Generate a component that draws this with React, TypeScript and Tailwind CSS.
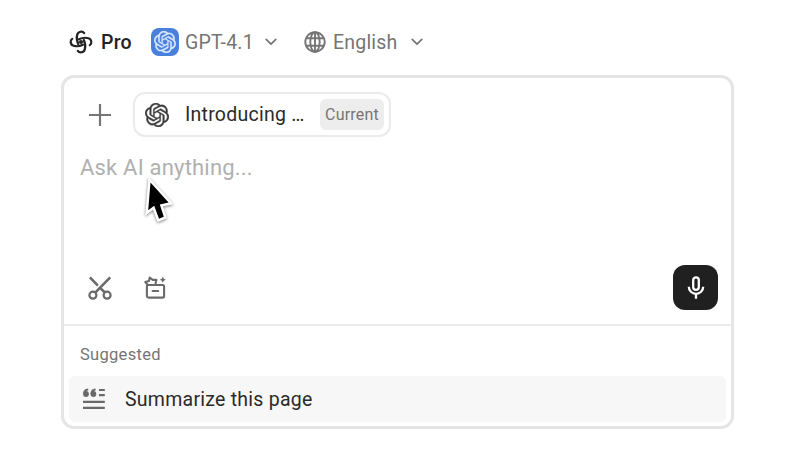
import React from "react";
import { SiOpenai } from "react-icons/si";

function Chevron({ className = "" }: { className?: string }) {
  return (
    <svg className={className} width="12" height="8" viewBox="0 0 12 8" fill="none" stroke="#757575" strokeWidth="1.7" strokeLinecap="round" strokeLinejoin="round">
      <path d="M1.2 1.3 6 6.1l4.8-4.8" />
    </svg>
  );
}

function KnotLogo() {
  const arm = "M15.2 3.2C13.6 .8 9.2 1.2 8.2 4.6C7.4 7.4 7.6 10.6 9.2 14";
  return (
    <svg width="24" height="24" viewBox="0 0 24 24" fill="none" stroke="#222" strokeWidth="2.2" strokeLinecap="round">
      {[0, 90, 180, 270].map((a) => (
        <path key={a} d={arm} transform={`rotate(${a} 12 12)`} />
      ))}
      <circle cx="12" cy="12" r="2.1" fill="#222" stroke="none" />
    </svg>
  );
}

function Globe() {
  return (
    <svg width="22" height="22" viewBox="0 0 22 22" fill="none" stroke="#757575" strokeWidth="1.9">
      <circle cx="11" cy="11" r="9.7" />
      <ellipse cx="11" cy="11" rx="4.7" ry="9.7" />
      <path d="M11 1.3v19.4M2.2 7.3h17.6M2.2 14.7h17.6" />
    </svg>
  );
}

function Scissors() {
  return (
    <svg width="24" height="24" viewBox="0 0 24 24" fill="none" stroke="#6a6a6a" strokeWidth="2.2">
      <path d="M1.9 1.4 9.9 9.6M22.2 1.4 7 16.8M12.6 12.4l4.6 4.4" strokeWidth="2.6" />
      <circle cx="4.9" cy="19.2" r="3.5" />
      <circle cx="19.1" cy="19.2" r="3.5" />
    </svg>
  );
}

function MagicBox() {
  return (
    <svg width="24" height="26" viewBox="0 0 24 26" fill="none" stroke="#6a6a6a" strokeWidth="2.1" strokeLinejoin="round">
      <rect x="3.9" y="10" width="17.2" height="12.6" rx="1.6" />
      <path d="M9.6 16h5.6" strokeLinecap="round" />
      <path d="M4.6 9.8 2.3 7.1l3.8-1.2.6-3.3 3.1 2.3 3.6-.2-1.1 5" />
      <path d="M19.8 1.8l1 2 2 1-2 1-1 2-1-2-2-1 2-1Z" fill="#6a6a6a" stroke="none" />
    </svg>
  );
}

function Mic() {
  return (
    <svg width="18" height="24" viewBox="0 0 18 24" fill="none" stroke="#fff" strokeWidth="2.3">
      <rect x="6.2" y="1.3" width="5.6" height="12.6" rx="2.8" />
      <path d="M1.8 10.8a7.2 7 0 0 0 14.4 0M9 17.8v5" />
    </svg>
  );
}

function SummaryIcon() {
  return (
    <svg width="24" height="22" viewBox="0 0 24 22" fill="none" stroke="#6a6a6a" strokeWidth="2.2">
      <path d="M17 2h5.8M17 7.2h5.8M1 13.9h21.8M1 19.9h21.8" />
      <g fill="#6a6a6a" stroke="none">
        <circle cx="4" cy="6" r="2.9" />
        <circle cx="11.4" cy="6" r="2.9" />
      </g>
      <path d="M2 6C2 3.2 3.4 1.8 6.2 1.5M9.4 6c0-2.8 1.4-4.2 4.2-4.5" strokeWidth="1.8" />
    </svg>
  );
}

function Cursor() {
  const arrow = "M15.5 12.6 13.2 40.2 19.2 35.8 24 48.8 28.8 46.8 24.8 34.4 33.6 32.6Z";
  return (
    <svg className="absolute left-[135px] top-[170px] drop-shadow-[0px_1px_1.5px_rgba(0,0,0,0.5)]" width="48" height="60" viewBox="0 0 48 60">
      <path d={arrow} fill="#fff" stroke="#fff" strokeWidth="5" />
      <path d={arrow} fill="#000" />
    </svg>
  );
}

export default function App() {
  return (
    <div className="relative h-[450px] w-[800px] overflow-hidden bg-white pt-[26px] pl-[61px] font-['Roboto','Liberation_Sans',sans-serif] text-[#757575]">
      <header className="flex h-8 items-center pl-2 text-[19.5px] tracking-[0.2px]">
        <KnotLogo />
        <span className="ml-2 w-[32px] pt-0.5 font-medium text-[#222]">Pro</span>
        <span className="ml-[18px] flex size-7 items-center justify-center rounded-lg bg-[#4980dc] text-[#dceaff]">
          <SiOpenai size={22} stroke="currentColor" strokeWidth={0.3} />
        </span>
        <span className="ml-[6px] w-[68px] pt-0.5 whitespace-nowrap">GPT-4.1</span>
        <Chevron className="ml-3" />
        <span className="ml-[27px]"><Globe /></span>
        <span className="ml-[7px] w-[65px] pt-0.5">English</span>
        <Chevron className="ml-[13px]" />
      </header>
      <main className="mt-[17px] flex h-[354px] w-[673px] flex-col rounded-[13px] border-[3px] border-[#e5e5e5] bg-white">
        <section className="flex h-[246px] flex-col pt-[14px] pr-[13px] pl-4">
          <div className="flex h-[45px] items-center">
            <svg className="ml-2" width="24" height="24" viewBox="0 0 24 24" stroke="#757575" strokeWidth="2.2"><path d="M12 1v22M1 12h22" /></svg>
            <div className="ml-[21px] flex h-[45px] w-[258px] items-center rounded-xl border-2 border-[#ebebeb] pl-[10px] text-[19.5px] text-[#2a2a2a]">
              <SiOpenai size={24} color="#3c3c3c" stroke="currentColor" strokeWidth={0.4} />
              <span className="ml-4 w-[120px] whitespace-nowrap tracking-[0.25px]">Introducing …</span>
              <span className="ml-[15px] flex h-[31px] w-16 items-center justify-center rounded-md bg-[#ededed] text-[16px] tracking-[0.2px] text-[#757575]">Current</span>
            </div>
          </div>
          <p className="mt-[17px] text-[22px] leading-7 tracking-[0.2px] text-[#b0b0b0]">Ask AI anything...</p>
          <div className="mt-auto mb-[14px] flex h-[45px] items-center">
            <span className="ml-2"><Scissors /></span>
            <span className="ml-[31px]"><MagicBox /></span>
            <button className="ml-auto flex size-[45px] items-center justify-center rounded-xl bg-[#202020]"><Mic /></button>
          </div>
        </section>
        <section className="flex-1 border-t-2 border-[#ececec] px-[5px] pt-[17px]">
          <h2 className="pl-[11px] text-[16.5px] leading-6 tracking-[0.3px]">Suggested</h2>
          <div className="mt-[9px] flex h-[46px] items-center rounded-md bg-[#f7f7f7] pl-[13px] text-[19.5px] tracking-[0.25px] text-[#2a2a2a]">
            <SummaryIcon />
            <span className="ml-[19px] pt-0.5">Summarize this page</span>
          </div>
        </section>
      </main>
      <Cursor />
    </div>
  );
}
